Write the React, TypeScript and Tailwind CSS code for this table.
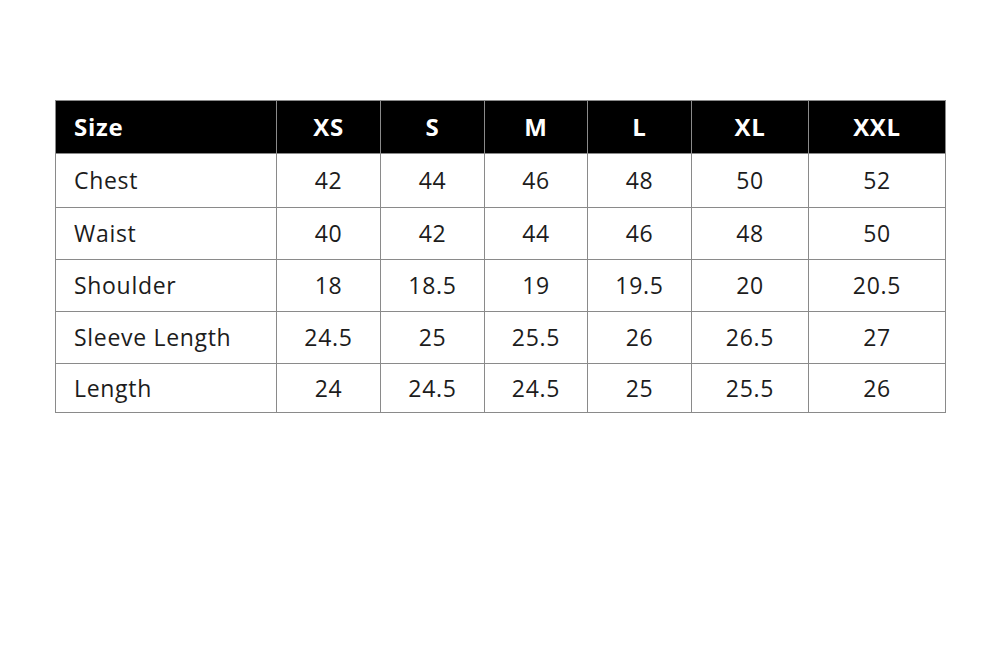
const headers = ["Size", "XS", "S", "M", "L", "XL", "XXL"]

const rows: [string, ...string[]][] = [
  ["Chest", "42", "44", "46", "48", "50", "52"],
  ["Waist", "40", "42", "44", "46", "48", "50"],
  ["Shoulder", "18", "18.5", "19", "19.5", "20", "20.5"],
  ["Sleeve Length", "24.5", "25", "25.5", "26", "26.5", "27"],
  ["Length", "24", "24.5", "24.5", "25", "25.5", "26"],
]

const colWidths = ["w-[221px]", "w-[104px]", "w-[104px]", "w-[103px]", "w-[104px]", "w-[117px]", "w-[137px]"]

export default function App() {
  return (
    <div className="w-[1000px] h-[667px] bg-white pt-[100px] pl-[55px]" style={{ fontFamily: '"Open Sans", "Liberation Sans", sans-serif' }}>
      <table className="w-[891px] border-collapse table-fixed">
        <colgroup>
          {colWidths.map((w, i) => (
            <col key={i} className={w} />
          ))}
        </colgroup>
        <thead>
          <tr className="h-[53px] bg-black text-white">
            {headers.map((h, i) => (
              <th
                key={h}
                className={
                  i === 0
                    ? "text-left pl-[18px] text-[24px] tracking-[0.03em] font-bold border border-[#8a8a8a]"
                    : "text-center text-[24px] tracking-[0.03em] font-bold border border-[#8a8a8a]"
                }
              >
                {h}
              </th>
            ))}
          </tr>
        </thead>
        <tbody className="text-[#1c1c1c]">
          {rows.map((r, ri) => (
            <tr key={r[0]} className={ri === 0 ? "h-[54px]" : ri === rows.length - 1 ? "h-[49px]" : "h-[52px]"}>
              {r.map((c, i) => (
                <td
                  key={i}
                  className={
                    i === 0
                      ? "text-left pl-[18px] text-[23px] tracking-[0.03em] border border-[#8a8a8a]"
                      : "text-center text-[23px] tracking-[0.03em] border border-[#8a8a8a]"
                  }
                >
                  {c}
                </td>
              ))}
            </tr>
          ))}
        </tbody>
      </table>
    </div>
  )
}
